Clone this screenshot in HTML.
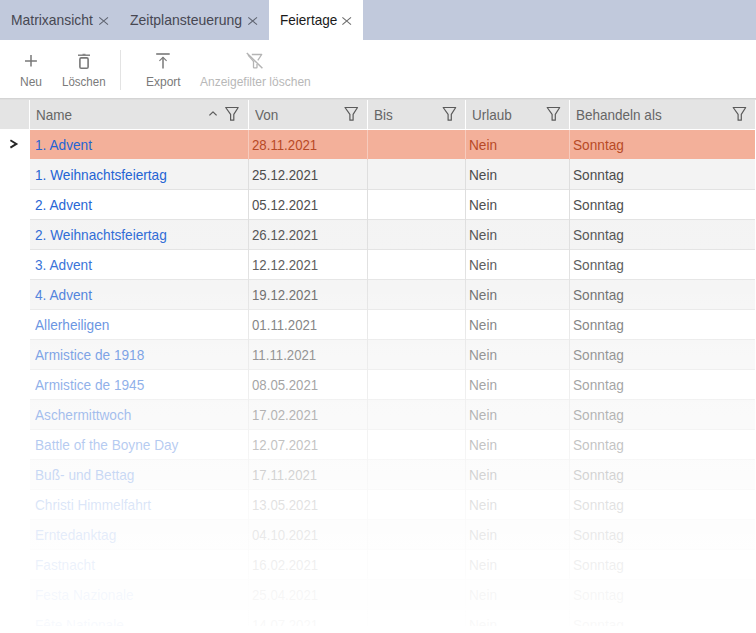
<!DOCTYPE html>
<html><head><meta charset="utf-8">
<style>
html,body{margin:0;padding:0;}
body{width:756px;height:633px;overflow:hidden;position:relative;background:#fff;font-family:"Liberation Sans",sans-serif;}
.tabbar{position:absolute;left:0;top:0;width:756px;height:40px;background:#c1c9dc;}
.tab{position:absolute;top:0;height:40px;font-size:14px;line-height:40px;color:#474752;white-space:nowrap;}
.tab .x{position:absolute;top:16px;}
.tab.active{background:#fff;}
.tt{position:absolute;top:12px;font-size:14.5px;line-height:17px;color:#474752;white-space:nowrap;transform-origin:0 0;}
.tt.act{color:#1a1a1a;}
.tb{position:absolute;font-size:12px;color:#7a7a7a;white-space:nowrap;}
.tb.dis{color:#b8b8b8;}
.sep{position:absolute;left:120px;top:50px;width:1px;height:40px;background:#e3e3e3;}
.hdr{position:absolute;left:0;top:98px;width:756px;height:32px;background:#fff;}
.hdr .line{position:absolute;left:0;top:0;width:756px;height:2px;background:linear-gradient(#d4d4d4,#d4d4d4 50%,#dedede 50%);}
.hc{position:absolute;top:2px;height:29px;background:#e4e4e4;font-size:13.8px;color:#666;}
.hc span{position:absolute;top:7px;font-size:14.3px;transform:scaleX(.945);transform-origin:0 0;}
.hc .fn{position:absolute;top:8px;line-height:0;}
.hc .fn svg{display:block;}
.row{position:absolute;left:0;width:756px;height:30px;}
.c{position:absolute;top:0;height:29px;border-bottom:1px solid #e2e2e2;font-size:13.7px;color:#4c4c4c;white-space:nowrap;}
.c span{position:absolute;top:7px;font-size:14.3px;transform:scaleX(.955);transform-origin:0 0;}
.c2 span{transform:scaleX(.925);}
.c1{left:30px;width:218px;color:#2464d4;}
.c1 span{left:5.2px;}
.c2{left:249px;width:118px;}
.c2 span{left:3px;}
.c3{left:368px;width:97px;}
.c4{left:466px;width:103px;}
.c4 span{left:2.7px;}
.c5{left:570px;width:185px;}
.c5 span{left:3px;}
.row .c{box-shadow:-1px 0 0 #dedede;}
.row .c1{box-shadow:none;}
.odd .c{background:#f3f3f3;}
.even .c{background:#fff;}
.sel .c{background:#f3b09a;color:#b84a26;border-bottom-color:#f3f3f3;box-shadow:-1px 0 0 #f7cbbd;}
.sel .c1{color:#2464d4;box-shadow:none;}
.fade{position:absolute;left:0;top:190px;width:756px;height:443px;background:linear-gradient(to bottom, rgba(255,255,255,0) 0px, rgba(255,255,255,0.1) 75px, rgba(255,255,255,0.32) 135px, rgba(255,255,255,0.58) 225px, rgba(255,255,255,0.84) 315px, rgba(255,255,255,0.95) 405px, rgba(255,255,255,0.965) 437px);}
.bottomclip{position:absolute;left:0;top:626px;width:756px;height:7px;background:#fff;}
</style></head><body>
<div class="tabbar">
  <div class="tab active" style="left:269px;width:94px;"></div>
  <span class="tt" style="left:11px;transform:scaleX(.957);">Matrixansicht</span>
  <span class="tt" style="left:130px;transform:scaleX(.965);">Zeitplansteuerung</span>
  <span class="tt act" style="left:280px;transform:scaleX(.935);">Feiertage</span>
  <svg style="position:absolute;left:0;top:0" width="400" height="40"><g fill="none" stroke-width="1.1">
  <path d="M99.3 17.4L108 24.6M108 17.4L99.3 24.6" stroke="#5f6470"/>
  <path d="M248.3 17.4L257 24.6M257 17.4L248.3 24.6" stroke="#5f6470"/>
  <path d="M342.4 17.4L351 24.6M351 17.4L342.4 24.6" stroke="#6c6c6c"/>
  </g></svg>
</div>
<div class="tb" style="left:20px;top:75px;">Neu</div>
<div class="tb" style="left:62px;top:75px;transform:scaleX(.96);transform-origin:0 0;">Löschen</div>
<div class="sep"></div>
<div class="tb" style="left:146px;top:75px;">Export</div>
<div class="tb dis" style="left:200px;top:75px;">Anzeigefilter löschen</div>
<div class="hdr"><div class="line"></div>
  <div class="hc" style="left:0;width:29px;"></div>
  <div class="hc" style="left:30px;width:218px;"><span style="left:6px">Name</span></div>
  <div class="hc" style="left:249px;width:118px;"><span style="left:6px">Von</span></div>
  <div class="hc" style="left:368px;width:97px;"><span style="left:6px">Bis</span></div>
  <div class="hc" style="left:466px;width:103px;"><span style="left:6px">Urlaub</span></div>
  <div class="hc" style="left:570px;width:185px;"><span style="left:6px">Behandeln als</span></div>
</div>
<div class="row sel" style="top:130px"><div class="c c1"><span>1. Advent</span></div><div class="c c2"><span>28.11.2021</span></div><div class="c c3"></div><div class="c c4"><span>Nein</span></div><div class="c c5"><span>Sonntag</span></div></div><div class="row odd" style="top:160px"><div class="c c1"><span>1. Weihnachtsfeiertag</span></div><div class="c c2"><span>25.12.2021</span></div><div class="c c3"></div><div class="c c4"><span>Nein</span></div><div class="c c5"><span>Sonntag</span></div></div><div class="row even" style="top:190px"><div class="c c1"><span>2. Advent</span></div><div class="c c2"><span>05.12.2021</span></div><div class="c c3"></div><div class="c c4"><span>Nein</span></div><div class="c c5"><span>Sonntag</span></div></div><div class="row odd" style="top:220px"><div class="c c1"><span>2. Weihnachtsfeiertag</span></div><div class="c c2"><span>26.12.2021</span></div><div class="c c3"></div><div class="c c4"><span>Nein</span></div><div class="c c5"><span>Sonntag</span></div></div><div class="row even" style="top:250px"><div class="c c1"><span>3. Advent</span></div><div class="c c2"><span>12.12.2021</span></div><div class="c c3"></div><div class="c c4"><span>Nein</span></div><div class="c c5"><span>Sonntag</span></div></div><div class="row odd" style="top:280px"><div class="c c1"><span>4. Advent</span></div><div class="c c2"><span>19.12.2021</span></div><div class="c c3"></div><div class="c c4"><span>Nein</span></div><div class="c c5"><span>Sonntag</span></div></div><div class="row even" style="top:310px"><div class="c c1"><span>Allerheiligen</span></div><div class="c c2"><span>01.11.2021</span></div><div class="c c3"></div><div class="c c4"><span>Nein</span></div><div class="c c5"><span>Sonntag</span></div></div><div class="row odd" style="top:340px"><div class="c c1"><span>Armistice de 1918</span></div><div class="c c2"><span>11.11.2021</span></div><div class="c c3"></div><div class="c c4"><span>Nein</span></div><div class="c c5"><span>Sonntag</span></div></div><div class="row even" style="top:370px"><div class="c c1"><span>Armistice de 1945</span></div><div class="c c2"><span>08.05.2021</span></div><div class="c c3"></div><div class="c c4"><span>Nein</span></div><div class="c c5"><span>Sonntag</span></div></div><div class="row odd" style="top:400px"><div class="c c1"><span>Aschermittwoch</span></div><div class="c c2"><span>17.02.2021</span></div><div class="c c3"></div><div class="c c4"><span>Nein</span></div><div class="c c5"><span>Sonntag</span></div></div><div class="row even" style="top:430px"><div class="c c1"><span>Battle of the Boyne Day</span></div><div class="c c2"><span>12.07.2021</span></div><div class="c c3"></div><div class="c c4"><span>Nein</span></div><div class="c c5"><span>Sonntag</span></div></div><div class="row odd" style="top:460px"><div class="c c1"><span>Buß- und Bettag</span></div><div class="c c2"><span>17.11.2021</span></div><div class="c c3"></div><div class="c c4"><span>Nein</span></div><div class="c c5"><span>Sonntag</span></div></div><div class="row even" style="top:490px"><div class="c c1"><span>Christi Himmelfahrt</span></div><div class="c c2"><span>13.05.2021</span></div><div class="c c3"></div><div class="c c4"><span>Nein</span></div><div class="c c5"><span>Sonntag</span></div></div><div class="row odd" style="top:520px"><div class="c c1"><span>Erntedanktag</span></div><div class="c c2"><span>04.10.2021</span></div><div class="c c3"></div><div class="c c4"><span>Nein</span></div><div class="c c5"><span>Sonntag</span></div></div><div class="row even" style="top:550px"><div class="c c1"><span>Fastnacht</span></div><div class="c c2"><span>16.02.2021</span></div><div class="c c3"></div><div class="c c4"><span>Nein</span></div><div class="c c5"><span>Sonntag</span></div></div><div class="row odd" style="top:580px"><div class="c c1"><span>Festa Nazionale</span></div><div class="c c2"><span>25.04.2021</span></div><div class="c c3"></div><div class="c c4"><span>Nein</span></div><div class="c c5"><span>Sonntag</span></div></div><div class="row even" style="top:610px"><div class="c c1"><span>Fête Nationale</span></div><div class="c c2"><span>14.07.2021</span></div><div class="c c3"></div><div class="c c4"><span>Nein</span></div><div class="c c5"><span>Sonntag</span></div></div>
<svg style="position:absolute;left:0;top:0" width="756" height="230" viewBox="0 0 756 230">
<g fill="none" stroke="#787878" stroke-width="1.5">
<path d="M31 55V66.6M25 60.9H36.9"/>
<path d="M78 55.2H90" stroke-width="1.4"/><path d="M82.5 54.3H85.5" stroke-width="1"/>
<rect x="79.9" y="57.9" width="8.2" height="10.4" rx="1.3" stroke-width="1.6"/>
<path d="M156.2 54H169.7" stroke-width="1.6"/>
<path d="M163 57.5V68.6"/><path d="M159.4 60.9L163 57.3L166.6 60.9" stroke-width="1.1"/>
</g>
<g fill="none" stroke="#b4b4b4" stroke-width="1.3" stroke-linejoin="round">
<path d="M251.8 54.5H261.7L257.8 60.3"/>
<path d="M253.5 61V67.2Q253.5 67.8 254.1 67.8H256.4Q257 67.8 257 67.2V64"/>
<path d="M248 55.2L253.5 61.3" stroke-width="1.2"/><path d="M246.8 53L262.4 68.2" stroke-width="1.5"/>
</g>
<g fill="none" stroke="#5a5a5a" stroke-width="1.2" stroke-linejoin="round">
<path d="M209.4 115.4L213 111.9L216.6 115.4" stroke-width="1.3"/>
<path d="M225.7 107.5H238.2L233.8 114.3V120.2H230.6V114.3Z"/><path d="M345.0 107.5H357.5L353.1 114.3V120.2H349.9V114.3Z"/><path d="M443.2 107.5H455.7L451.3 114.3V120.2H448.1V114.3Z"/><path d="M547.2 107.5H559.7L555.3 114.3V120.2H552.1V114.3Z"/><path d="M733.2 107.5H745.7L741.3 114.3V120.2H738.1V114.3Z"/>
</g>
<path d="M10.4 140.2L16.4 143.9L10.4 147.6" fill="none" stroke="#262626" stroke-width="1.9"/>
</svg>

<div class="fade"></div>
<div style="position:absolute;left:0;top:626px;width:756px;height:7px;background:#fff;"></div>

</body></html>
